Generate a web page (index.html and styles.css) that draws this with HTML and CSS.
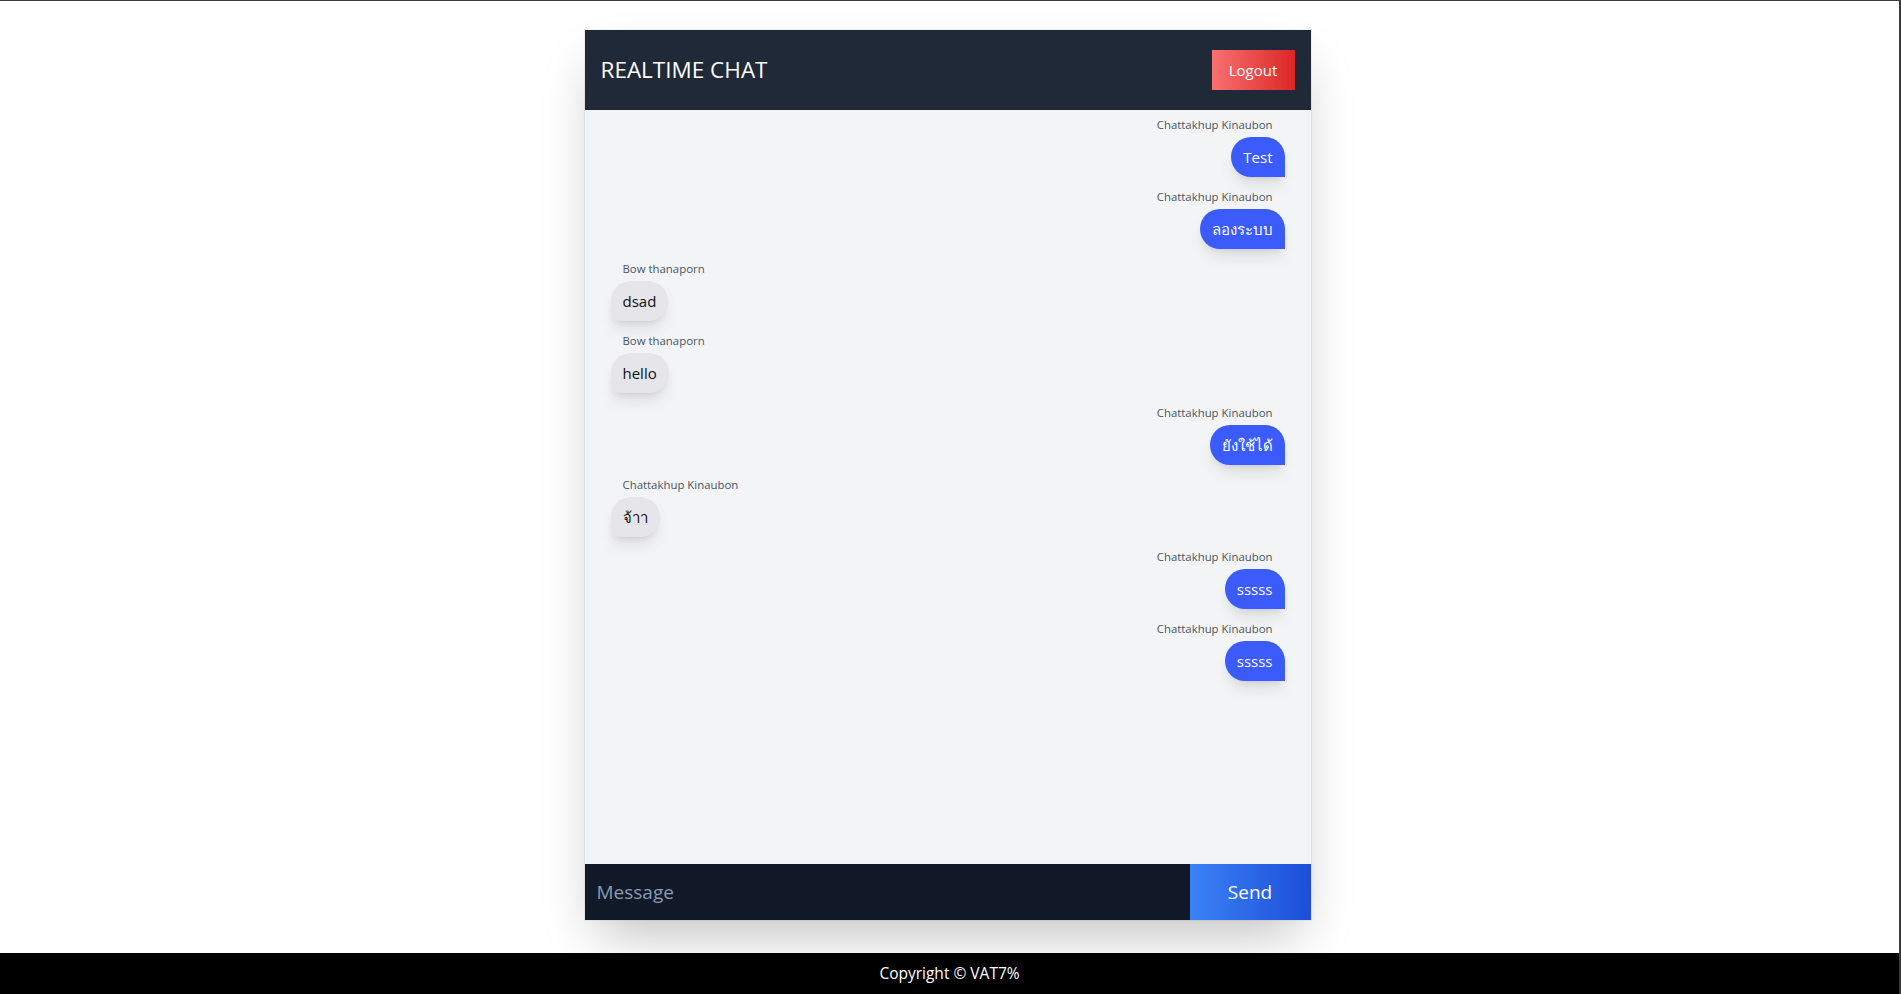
FILE: index.html
```html
<!DOCTYPE html>
<html lang="th">
<head>
<meta charset="utf-8">
<title>Realtime Chat</title>
<link rel="stylesheet" href="styles.css">
</head>
<body>
<div class="page">
  <main class="main">
    <section class="chat">
      <header class="chat-header">
        <h1 class="title">REALTIME CHAT</h1>
        <button class="logout">Logout</button>
      </header>
      <div class="messages">
        <div class="msg msg-own">
          <div class="name">Chattakhup Kinaubon</div>
          <div class="bubble">Test</div>
        </div>
        <div class="msg msg-own">
          <div class="name">Chattakhup Kinaubon</div>
          <div class="bubble">ลองระบบ</div>
        </div>
        <div class="msg msg-other">
          <div class="name">Bow thanaporn</div>
          <div class="bubble">dsad</div>
        </div>
        <div class="msg msg-other">
          <div class="name">Bow thanaporn</div>
          <div class="bubble">hello</div>
        </div>
        <div class="msg msg-own">
          <div class="name">Chattakhup Kinaubon</div>
          <div class="bubble">ยังใช้ได้</div>
        </div>
        <div class="msg msg-other">
          <div class="name">Chattakhup Kinaubon</div>
          <div class="bubble">จ้าา</div>
        </div>
        <div class="msg msg-own">
          <div class="name">Chattakhup Kinaubon</div>
          <div class="bubble">sssss</div>
        </div>
        <div class="msg msg-own">
          <div class="name">Chattakhup Kinaubon</div>
          <div class="bubble">sssss</div>
        </div>
      </div>
      <form class="composer">
        <input class="composer-input" type="text" placeholder="Message">
        <button class="send" type="button">Send</button>
      </form>
    </section>
  </main>
  <footer class="footer">Copyright © VAT7%</footer>
</div>
</body>
</html>
```
FILE: styles.css
```css
* { box-sizing: border-box; }

html, body {
  margin: 0;
  padding: 0;
  height: 100%;
}

body {
  font-family: "Open Sans", "Noto Sans", "DejaVu Sans", sans-serif;
  background: #ffffff;
  color: #111827;
  border-top: 1px solid #3a3a3a;
  border-right: 2px solid #3a3a3a;
}

.page {
  min-height: 100%;
  display: flex;
  flex-direction: column;
}

.main {
  flex: 1;
  display: flex;
  justify-content: center;
  padding-top: 29px;
  padding-right: 4px;
}

.chat {
  width: 726px;
  height: 890px;
  display: flex;
  flex-direction: column;
  box-shadow: 0 25px 50px -12px rgba(0, 0, 0, 0.25), 0 0 0 1px rgba(0, 0, 0, 0.05);
}

.chat-header {
  height: 80px;
  flex: none;
  background: #1f2937;
  display: flex;
  align-items: center;
  justify-content: space-between;
  padding: 0 16px;
}

.title {
  margin: 0;
  color: #ffffff;
  font-size: 22.5px;
  font-weight: 400;
  line-height: 32px;
}

.logout {
  width: 83px;
  height: 40px;
  border: 0;
  padding: 0;
  color: #ffffff;
  font-family: inherit;
  font-size: 15px;
  background: linear-gradient(to right, #f87171, #dc2626);
  cursor: pointer;
}

.messages {
  flex: 1;
  background: #f3f4f6;
  padding: 7px 26px 0;
  overflow: hidden;
}

.msg {
  display: flex;
  flex-direction: column;
  margin-bottom: 12px;
}

.msg-own { align-items: flex-end; }
.msg-other { align-items: flex-start; }

.name {
  font-size: 11.4px;
  line-height: 16px;
  color: #4b5563;
  padding: 0 12px;
  margin-bottom: 4px;
}

.bubble {
  font-size: 15px;
  line-height: 24px;
  height: 40px;
  padding: 8px 12px;
  border-radius: 24px;
  box-shadow: 0 10px 15px -3px rgba(0, 0, 0, 0.1), 0 4px 6px -4px rgba(0, 0, 0, 0.1);
}

.msg-own .bubble {
  background: #3b5bfd;
  color: #ffffff;
  border-bottom-right-radius: 0;
}

.msg-other .bubble {
  background: #e5e5ea;
  color: #111111;
  border-bottom-left-radius: 0;
}

.composer {
  height: 56px;
  flex: none;
  display: flex;
  margin: 0;
  background: #111827;
}

.composer-input {
  flex: 1;
  min-width: 0;
  border: 0;
  outline: none;
  background: #111827;
  color: #ffffff;
  font-family: inherit;
  font-size: 19px;
  padding: 0 12px;
}

.composer-input::placeholder { color: #8b9bb0; }

.send {
  width: 121px;
  flex: none;
  border: 0;
  color: #ffffff;
  font-family: inherit;
  font-size: 19px;
  background: linear-gradient(to right, #3b82f6, #1d4ed8);
  cursor: pointer;
}

.footer {
  background: #000000;
  color: #ffffff;
  text-align: center;
  font-size: 15.5px;
  line-height: 24px;
  padding: 8px 0 9px;
  margin-top: 33px;
}
```
